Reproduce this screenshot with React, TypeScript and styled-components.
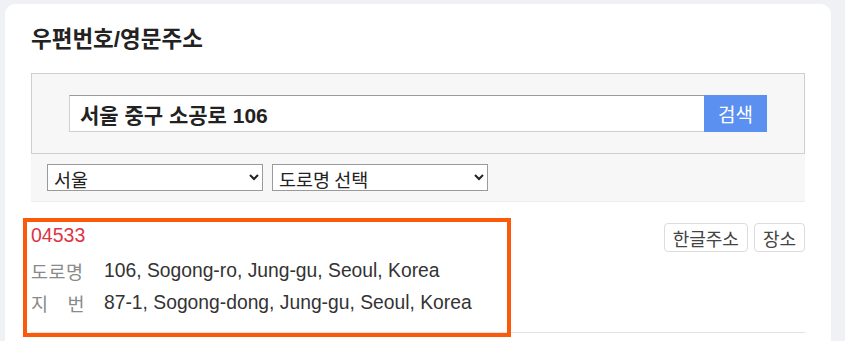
import React from "react";
import styled, { createGlobalStyle } from "styled-components";

const Global = createGlobalStyle`
  html, body { margin: 0; padding: 0; background: #eff1f5; }
  body { font-family: "Liberation Sans", "Noto Sans CJK KR", sans-serif; }
  * { box-sizing: border-box; }
`;

const Page = styled.div`
  padding: 4px 14px 0 5px;
  height: 341px;
  overflow: hidden;
`;

const Card = styled.div`
  background: #fff;
  border-radius: 10px 10px 0 0;
  padding: 19px 26px 20px 26px;
  min-height: 400px;
`;

const Title = styled.h1`
  margin: 0;
  font-size: 22.5px;
  font-weight: 700;
  color: #222;
  line-height: 34px;
  letter-spacing: 0;
`;

const SearchPanel = styled.div`
  margin-top: 16px;
  border: 1px solid #cfcfcf;
  background: #f7f7f7;
  padding: 21px 37px 21px 37px;
  display: flex;
`;

const SearchInput = styled.input`
  flex: 1;
  height: 37px;
  border: 1px solid #cfcfcf;
  border-top-color: #9a9a9a;
  border-right: none;
  background: #fff;
  padding: 0 10px;
  font-family: "Liberation Sans", "Noto Sans CJK KR", sans-serif;
  font-size: 21px;
  font-weight: 700;
  color: #222;
  outline: none;
`;

const SearchButton = styled.button`
  width: 63px;
  height: 37px;
  border: none;
  background: #5b8ff0;
  color: #fff;
  font-family: "Noto Sans CJK KR", sans-serif;
  font-size: 19px;
  padding: 0;
`;

const SelectBar = styled.div`
  background: #f7f7f7;
  border-bottom: 1px solid #ececec;
  padding: 10px 16px 10px 16px;
  display: flex;
  gap: 9px;
`;

const Select = styled.select`
  width: 216px;
  height: 27px;
  border: 1px solid #9a9a9a;
  border-radius: 0;
  background: #fff;
  font-family: "Noto Sans CJK KR", sans-serif;
  font-size: 18.5px;
  color: #222;
  padding: 0 2px;
`;

const Result = styled.div`
  position: relative;
  display: flex;
  justify-content: space-between;
  height: 131px;
  border-bottom: 1px solid #e3e3e3;
`;

const Info = styled.div`
  display: flex;
  flex-direction: column;
  padding-top: 19px;
`;

const Zip = styled.div`
  color: #dc3545;
  font-size: 19.5px;
  line-height: 28px;
`;

const Row = styled.div<{ $first?: boolean }>`
  display: flex;
  align-items: center;
  height: 32px;
  margin-top: ${(p) => (p.$first ? "6px" : "0")};
`;

const Label = styled.span`
  width: 73px;
  color: #8a8a8a;
  font-family: "Noto Sans CJK KR", sans-serif;
  font-size: 18.5px;
  letter-spacing: 0.5px;
`;

const Value = styled.span`
  color: #333;
  font-size: 19.3px;
`;

const Actions = styled.div`
  display: flex;
  gap: 6px;
  align-items: flex-start;
  padding-top: 21px;
`;

const SmallButton = styled.button`
  height: 29px;
  padding: 0 8px;
  border: 1px solid #dcdcdc;
  border-radius: 4px;
  background: #fff;
  color: #444;
  font-family: "Noto Sans CJK KR", sans-serif;
  font-size: 18px;
  line-height: 1;
`;

const Highlight = styled.div`
  position: absolute;
  left: -8px;
  top: 16px;
  width: 488px;
  height: 119px;
  border: 4px solid #fa5a0a;
  pointer-events: none;
`;

export default function App() {
  return (
    <>
      <Global />
      <Page>
        <Card>
          <Title>우편번호/영문주소</Title>
          <SearchPanel>
            <SearchInput defaultValue="서울 중구 소공로 106" />
            <SearchButton>검색</SearchButton>
          </SearchPanel>
          <SelectBar>
            <Select defaultValue="서울">
              <option>서울</option>
            </Select>
            <Select defaultValue="도로명 선택">
              <option>도로명 선택</option>
            </Select>
          </SelectBar>
          <Result>
            <Info>
              <Zip>04533</Zip>
              <Row $first>
                <Label>도로명</Label>
                <Value>106, Sogong-ro, Jung-gu, Seoul, Korea</Value>
              </Row>
              <Row>
                <Label>지{"\u3000"}번</Label>
                <Value>87-1, Sogong-dong, Jung-gu, Seoul, Korea</Value>
              </Row>
            </Info>
            <Actions>
              <SmallButton>한글주소</SmallButton>
              <SmallButton>장소</SmallButton>
            </Actions>
            <Highlight />
          </Result>
        </Card>
      </Page>
    </>
  );
}
